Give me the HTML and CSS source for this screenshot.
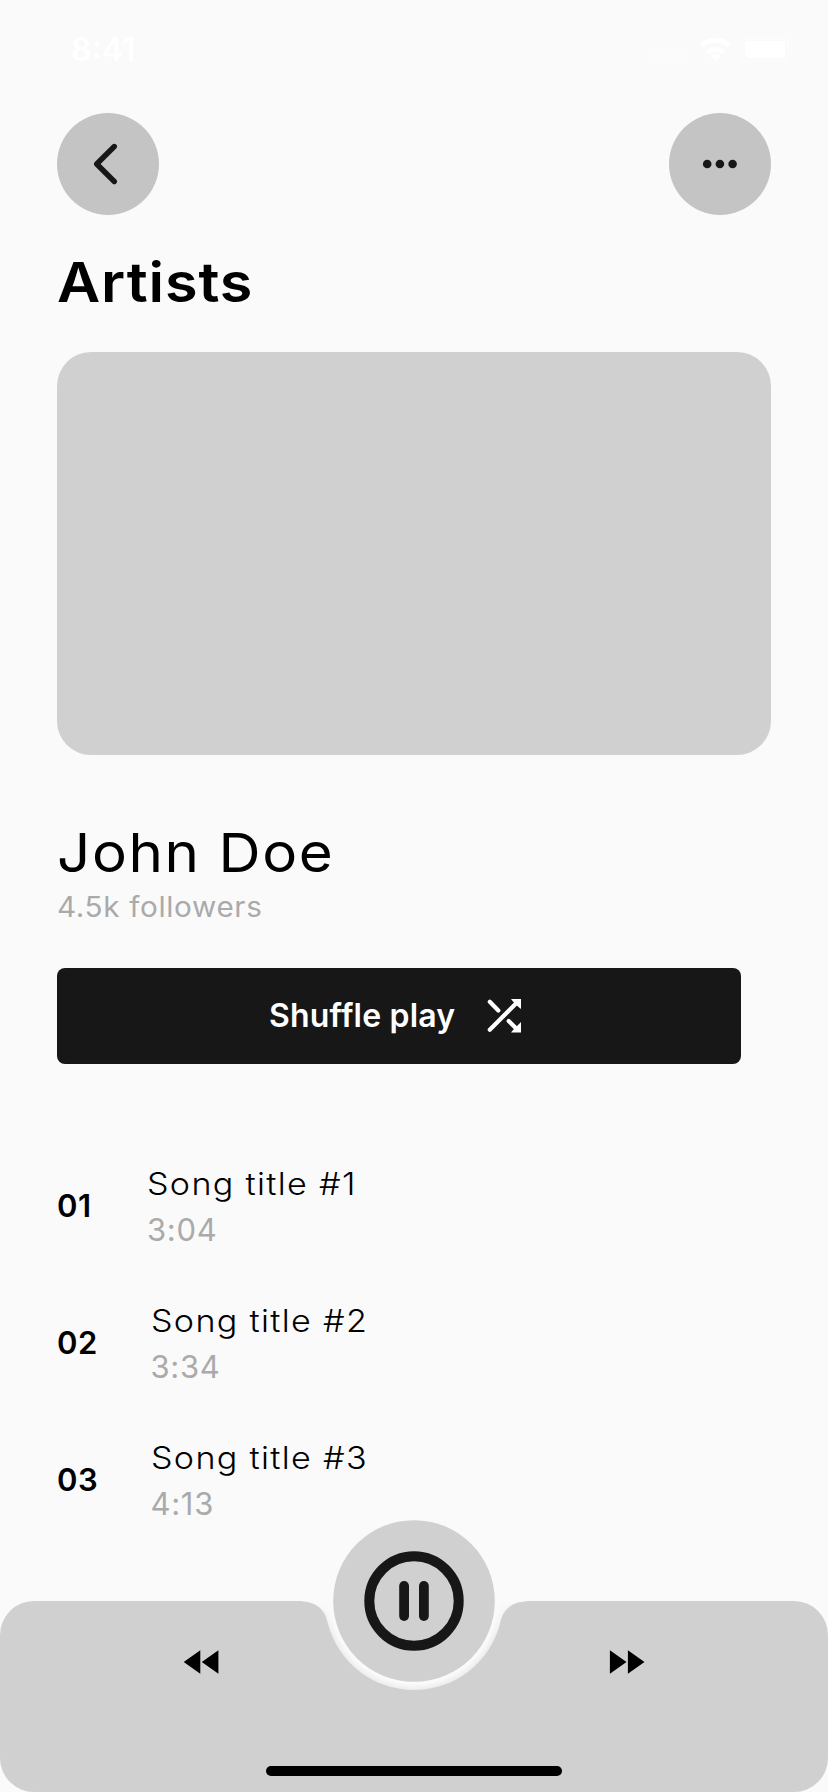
FILE: index.html
```html
<!DOCTYPE html>
<html lang="en">
<head>
<meta charset="utf-8">
<title>Artists</title>
<link rel="stylesheet" href="styles.css">
</head>
<body>
<div class="screen">
  <div class="status">
    <span class="clock">8:41</span>
    <svg class="status-icons" width="142" height="28" viewBox="652 35 142 28">
      <g fill="#fbfbfb"><circle cx="657" cy="57" r="3.500"/><circle cx="667" cy="57" r="3.500"/><circle cx="677" cy="57" r="3.500"/><circle cx="686" cy="57" r="3.500"/></g>
      <g fill="none" stroke="#fff" stroke-width="5"><path d="M701.500 45.500Q715.500 34.500 729.500 45.500"/><path d="M707.500 52.500Q715.500 46 723.500 52.500"/></g>
      <path d="M710.500 56Q715.500 52 720.500 56L715.500 61Z" fill="#fff"/>
      <rect x="742" y="38.500" width="46" height="23" rx="6" fill="none" stroke="#fcfcfc" stroke-width="2"/>
      <rect x="745" y="41" width="40" height="17" rx="3" fill="#fff"/>
      <path d="M791 46q3 3.500 0 7z" fill="#fcfcfc"/>
    </svg>
  </div>
  <header class="topbar">
    <button class="round" aria-label="Back">
      <svg width="102" height="102" viewBox="0 0 102 102"><path d="M57.300 33.500L39.700 51L57.300 68.500" fill="none" stroke="#171717" stroke-width="5.400" stroke-linecap="round" stroke-linejoin="round"/></svg>
    </button>
    <button class="round" aria-label="More">
      <svg width="102" height="102" viewBox="0 0 102 102" fill="#171717"><circle cx="38.200" cy="51" r="4.300"/><circle cx="50.900" cy="51" r="4.300"/><circle cx="63.600" cy="51" r="4.300"/></svg>
    </button>
  </header>
  <h1 class="title">Artists</h1>
  <div class="hero"></div>
  <h2 class="name">John Doe</h2>
  <p class="followers">4.5k followers</p>
  <button class="shuffle">
    <span class="shuffle-label">Shuffle play</span>
    <svg width="34" height="36" viewBox="487 998 34 36">
      <g fill="none" stroke="#fff" stroke-width="4.200" stroke-linecap="round"><path d="M489.800 1029.700L516 1003.500M489.800 1001.800L498.300 1010.500"/><path d="M508.700 1021L516 1028.300"/></g>
      <path d="M511 999H521V1009L518.500 1007L513 1001.500ZM521 1022V1032.500H511L513 1030L518.500 1024.500Z" fill="#fff"/>
    </svg>
  </button>
  <ol class="songs">
    <li class="song"><span class="num num-one">01</span><div><div class="song-title">Song title #1</div><div class="time">3:04</div></div></li>
    <li class="song"><span class="num">02</span><div><div class="song-title">Song title #2</div><div class="time">3:34</div></div></li>
    <li class="song"><span class="num">03</span><div><div class="song-title">Song title #3</div><div class="time">4:13</div></div></li>
  </ol>
  <footer class="player">
    <svg width="828" height="274" viewBox="0 1518 828 274">
      <defs>
        <radialGradient id="rim" gradientUnits="userSpaceOnUse" cx="414" cy="1601" r="91">
          <stop offset=".91" stop-color="#fafafa"/><stop offset="1" stop-color="#e8e8e8"/>
        </radialGradient>
        <linearGradient id="fade" x1="0" y1="0" x2="0" y2="1">
          <stop offset="0" stop-color="#fafafa"/><stop offset="1" stop-color="#fafafa" stop-opacity="0"/>
        </linearGradient>
      </defs>
      <path d="M306 1602H522V1640L490 1695H338L306 1640Z" fill="url(#rim)"/>
      <rect x="300" y="1601" width="228" height="36" fill="url(#fade)"/>
      <path d="M34 1601H296C314 1601 325 1607 328 1624A89 89 0 0 0 500 1624C503 1607 514 1601 532 1601H794A34 34 0 0 1 828 1635V1758A34 34 0 0 1 794 1792H34A34 34 0 0 1 0 1758V1635A34 34 0 0 1 34 1601Z" fill="#d0d0d0"/>
      <circle cx="414" cy="1601" r="80.800" fill="#d0d0d0"/>
      <circle cx="414" cy="1601" r="44.700" fill="none" stroke="#171717" stroke-width="10"/>
      <g fill="#171717"><rect x="399.200" y="1581" width="9.800" height="40" rx="4.900"/><rect x="419" y="1581" width="9.800" height="40" rx="4.900"/></g>
      <path d="M183.700 1662L200.300 1650.300V1673.700ZM201.800 1662L218.400 1650.300V1673.700ZM626.500 1662L609.900 1650.300V1673.700ZM644.500 1662L627.900 1650.300V1673.700Z"/>
      <rect x="266" y="1766" width="296" height="10" rx="5"/>
    </svg>
  </footer>
</div>
</body>
</html>
```
FILE: styles.css
```css
* { box-sizing: border-box; margin: 0; padding: 0; }
body { background: #fafafa; font-family: Inter, "Liberation Sans", sans-serif; color: #000; }
button { border: 0; font: inherit; }
svg { display: block; }
.screen { width: 828px; height: 1792px; display: flex; flex-direction: column; align-items: flex-start; padding-left: 57px; overflow: hidden; }
.screen > * { flex: none; }
.status { width: 771px; height: 113px; padding: 30px 34px 0 14px; display: flex; justify-content: space-between; align-items: flex-start; color: #fff; }
.clock { font-size: 32px; font-weight: 600; line-height: 40px; }
.status-icons { margin-top: 5px; }
.topbar { width: 714px; height: 102px; display: flex; justify-content: space-between; }
.round { width: 102px; height: 102px; border-radius: 50%; background: #c4c4c4; }

/* Headings are set slightly extended */
.title, .name, .song-title, .followers { transform-origin: 0 0; white-space: nowrap; }
.title { margin-top: 37px; font-size: 55px; line-height: 60px; font-weight: 600; letter-spacing: .83px; transform: scaleX(1.08); }
.hero { margin-top: 40px; width: 714px; height: 403px; border-radius: 34px; background: #d0d0d0; }
.name { margin-top: 68px; font-size: 54px; line-height: 60px; font-weight: 400; letter-spacing: 1.48px; transform: scaleX(1.08); }
.followers { margin-top: 7px; font-size: 28px; line-height: 34px; color: #aaa; letter-spacing: .61px; transform: scaleX(1.06); }

.shuffle { margin-top: 43.5px; width: 684px; height: 96px; border-radius: 8px; background: #171717; color: #fff; display: flex; align-items: center; padding-left: 212px; }
.shuffle-label { width: 218px; text-align: left; font-size: 32px; line-height: 40px; font-weight: 600; letter-spacing: .2px; }

.songs { list-style: none; margin-top: 97.5px; height: 413px; }
.song { height: 137px; display: flex; }
.num { width: 93.500px; padding-top: 25px; font-size: 31px; line-height: 40px; font-weight: 600; letter-spacing: .6px; }
.num-one { width: 90px; }
.song-title { font-size: 31px; line-height: 46px; font-weight: 300; letter-spacing: 1.2px; transform: scaleX(1.1); }
.time { font-size: 31px; line-height: 46px; color: #aaa; letter-spacing: .7px; }
.player { margin: -56px 0 0 -57px; height: 274px; }
```
